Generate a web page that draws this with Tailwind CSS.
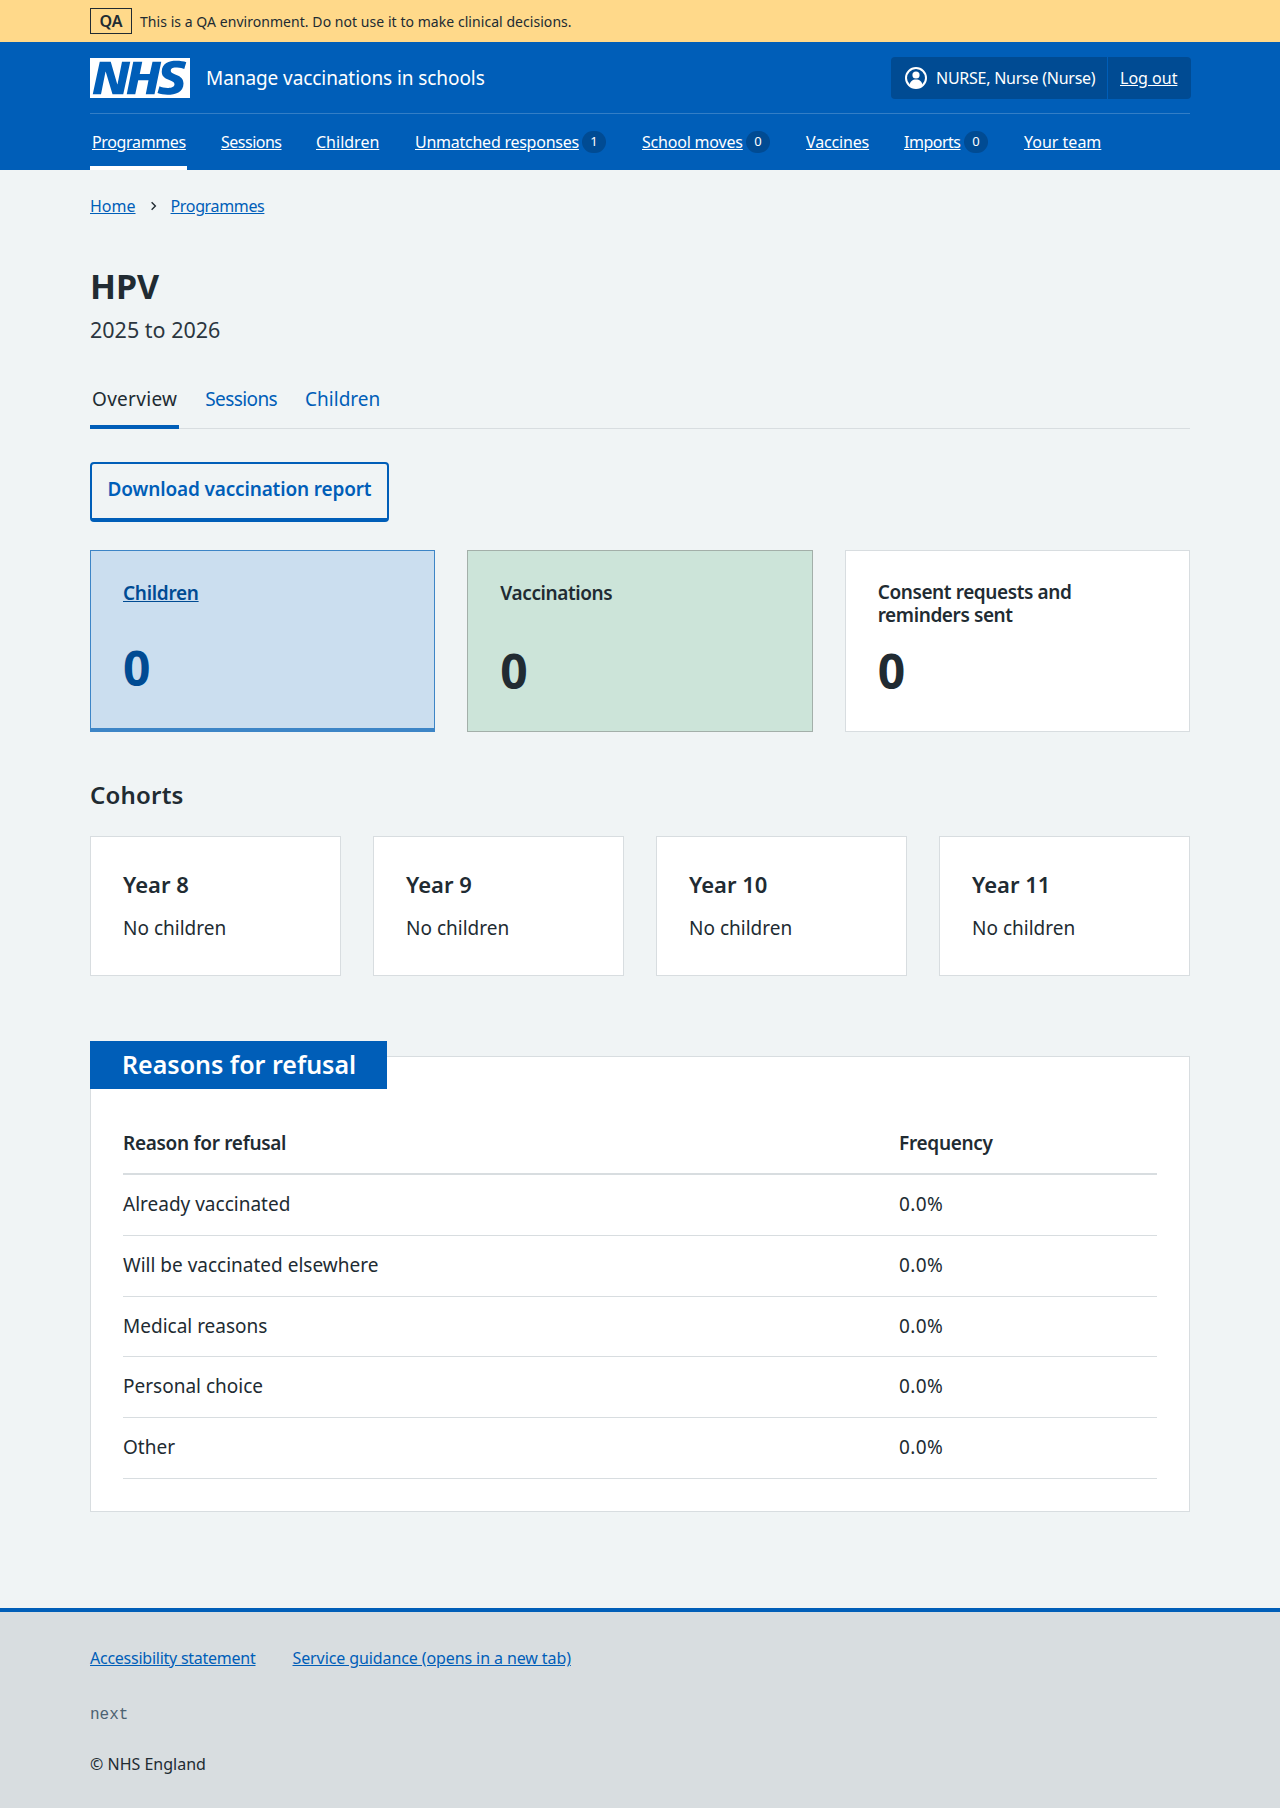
<!DOCTYPE html>
<html lang="en">
<head>
  <meta charset="UTF-8">
  <meta name="viewport" content="width=device-width, initial-scale=1.0">
  <title>HPV – Manage vaccinations in schools</title>
  <script src="https://cdn.jsdelivr.net/npm/@tailwindcss/browser@4"></script>
</head>
<body class="bg-[#f0f4f5] text-[#212b32] font-['Noto_Sans',sans-serif] min-h-[1808px] flex flex-col">

<!-- Environment banner -->
<div class="bg-[#ffd98a] h-[42px]">
  <div class="w-[1100px] mx-auto h-full flex items-center gap-2">
    <strong class="border border-[#212b32] h-[26px] w-[42px] flex items-center justify-center text-[16px] font-semibold">QA</strong>
    <span class="text-[14px] tracking-[0.05px]">This is a QA environment. Do not use it to make clinical decisions.</span>
  </div>
</div>

<!-- Header -->
<header class="bg-[#005eb8] h-[128px] text-white">
  <div class="w-[1100px] mx-auto">
    <div class="h-[72px] flex items-start justify-between border-b border-white/20">
      <div class="flex items-center gap-4 mt-4">
        <svg class="w-[100px] h-[40px]" viewBox="0 0 40 16" preserveAspectRatio="none">
          <path fill="#fff" d="M0 0h40v16H0z"></path>
          <path fill="#005eb8" d="M3.9 1.5h4.4l2.6 9h.1l1.8-9h3.3l-2.8 13H9l-2.7-9h-.1l-1.8 9H1.1M17.3 1.5h3.6l-1 4.9h4L25 1.5h3.5l-2.7 13h-3.5l1.1-5.6h-4.1l-1.2 5.6h-3.4M37.7 4.4c-.7-.3-1.6-.6-2.9-.6-1.4 0-2.5.2-2.5 1.3 0 1.8 5.1 1.2 5.1 5.1 0 3.6-3.3 4.5-6.4 4.5-1.3 0-2.9-.3-4-.7l.8-2.7c.7.4 2.1.7 3.2.7s2.8-.2 2.8-1.5c0-2.1-5.1-1.3-5.1-5 0-3.4 2.9-4.4 5.8-4.4 1.6 0 3.1.2 4 .6"></path>
        </svg>
        <span class="text-[19px] tracking-[-0.08px]">Manage vaccinations in schools</span>
      </div>
      <div class="mt-[15px] mr-[-1px] h-[42px] w-[300px] bg-[#004b93] rounded flex items-center text-[16px]">
        <div class="flex items-center gap-2 pl-[13px] w-[216px] h-full">
          <svg class="w-[24px] h-[24px]" viewBox="0 0 24 24">
            <circle cx="12" cy="12" r="10" fill="none" stroke="#fff" stroke-width="2"></circle>
            <circle cx="12" cy="9" r="3.6" fill="#fff"></circle>
            <path fill="#fff" d="M5.5 19c.5-3.5 3-5.5 6.5-5.500s6 2 6.5 5.500c-1.800 1.700-4 2.600-6.500 2.600s-4.700-.9-6.500-2.600z"></path>
          </svg>
          <span class="tracking-[-0.25px]">NURSE, Nurse (Nurse)</span>
        </div>
        <div class="h-full border-l border-[#005eb8] flex items-center pl-3">
          <a href="#" class="underline">Log out</a>
        </div>
      </div>
    </div>
    <nav class="h-[56px] flex gap-8 text-[16px] whitespace-nowrap">
      <a href="#" class="w-[97px] px-[2px] h-full pt-[16px] border-b-4 border-white"><span class="underline tracking-[-0.35px]">Programmes</span></a>
      <a href="#" class="w-[63px] px-[2px] h-full pt-[16px]"><span class="underline tracking-[-0.5px]">Sessions</span></a>
      <a href="#" class="w-[67px] px-[2px] h-full pt-[16px]"><span class="underline">Children</span></a>
      <a href="#" class="w-[195px] px-[2px] h-full pt-[16px] flex items-start"><span class="underline tracking-[-0.25px]">Unmatched responses</span><span class="ml-auto w-[24px] h-[22px] mt-[1px] rounded-full bg-[#004b93] text-[13px] flex items-center justify-center">1</span></a>
      <a href="#" class="w-[132px] px-[2px] h-full pt-[16px] flex items-start"><span class="underline tracking-[-0.2px]">School moves</span><span class="ml-auto w-[24px] h-[22px] mt-[1px] rounded-full bg-[#004b93] text-[13px] flex items-center justify-center">0</span></a>
      <a href="#" class="w-[66px] px-[2px] h-full pt-[16px]"><span class="underline tracking-[-0.15px]">Vaccines</span></a>
      <a href="#" class="w-[88px] px-[2px] h-full pt-[16px] flex items-start"><span class="underline tracking-[-0.5px]">Imports</span><span class="ml-auto w-[24px] h-[22px] mt-[1px] rounded-full bg-[#004b93] text-[13px] flex items-center justify-center">0</span></a>
      <a href="#" class="w-[80px] px-[2px] h-full pt-[16px]"><span class="underline">Your team</span></a>
    </nav>
  </div>
</header>

<main class="w-[1100px] mx-auto flex-1">
  <!-- Breadcrumb -->
  <div class="flex items-center text-[16px] text-[#005eb8] mt-[24px] h-[24px]">
    <a href="#" class="underline">Home</a>
    <svg class="w-[15px] h-[16px] mx-[10px] text-[#212b32]" viewBox="0 0 16 16"><path d="M6 4l4 4-4 4" fill="none" stroke="currentColor" stroke-width="1.500"></path></svg>
    <a href="#" class="underline tracking-[-0.35px]">Programmes</a>
  </div>

  <h1 class="text-[34px] font-bold leading-[44px] mt-[46px]">HPV</h1>
  <p class="text-[21.500px] leading-[32px] mt-[6px] text-[#2b3640]">2025 to 2026</p>

  <!-- Tabs -->
  <div class="flex gap-[24px] border-b border-[#d8dde0] h-[52px] mt-[31px] text-[19px] text-[#005eb8]">
    <a href="#" class="px-[2px] h-[52px] pt-[8px] border-b-4 border-[#005eb8] text-[#212b32] tracking-[0.3px]">Overview</a>
    <a href="#" class="px-[2px] h-full pt-[8px] tracking-[-0.6px]">Sessions</a>
    <a href="#" class="px-[2px] h-full pt-[8px]">Children</a>
  </div>

  <button class="block mt-[33px] w-[299px] h-[60px] pb-[3px] bg-transparent border-2 border-b-4 border-[#005eb8] rounded text-[#005eb8] font-semibold text-[19px] tracking-[-0.15px]">Download vaccination report</button>

  <!-- Stat cards -->
  <div class="grid grid-cols-3 gap-8 mt-[28px]">
    <div class="h-[182px] bg-[#cbdeef] border border-[#3d85c6] border-b-4 px-8 pt-[28px]">
      <a href="#" class="text-[19px] font-semibold text-[#004b93] underline leading-[28px] block tracking-[-0.3px]">Children</a>
      <p class="text-[48px] font-bold text-[#004b93] leading-[56px] mt-[33px]">0</p>
    </div>
    <div class="h-[182px] bg-[#cce4d9] border border-[#a3afa9] px-8 pt-[28px]">
      <p class="text-[19px] font-semibold leading-[28px] tracking-[-0.4px]">Vaccinations</p>
      <p class="text-[48px] font-bold leading-[56px] mt-[36px]">0</p>
    </div>
    <div class="h-[182px] bg-white border border-[#d8dde0] px-8 pt-[30px]">
      <p class="text-[19px] font-semibold leading-[23px] tracking-[-0.4px]">Consent requests and reminders sent</p>
      <p class="text-[48px] font-bold leading-[56px] mt-[16px]">0</p>
    </div>
  </div>

  <h2 class="text-[24px] font-semibold leading-[32px] mt-[47px] tracking-[0.2px]">Cohorts</h2>

  <div class="grid grid-cols-4 gap-8 mt-[25px]">
    <div class="h-[140px] bg-white border border-[#d8dde0] px-8 pt-[31px]">
      <h3 class="text-[22px] font-semibold leading-[32px]">Year 8</h3>
      <p class="text-[19px] leading-[28px] mt-[14px]">No children</p>
    </div>
    <div class="h-[140px] bg-white border border-[#d8dde0] px-8 pt-[31px]">
      <h3 class="text-[22px] font-semibold leading-[32px]">Year 9</h3>
      <p class="text-[19px] leading-[28px] mt-[14px]">No children</p>
    </div>
    <div class="h-[140px] bg-white border border-[#d8dde0] px-8 pt-[31px]">
      <h3 class="text-[22px] font-semibold leading-[32px]">Year 10</h3>
      <p class="text-[19px] leading-[28px] mt-[14px]">No children</p>
    </div>
    <div class="h-[140px] bg-white border border-[#d8dde0] px-8 pt-[31px]">
      <h3 class="text-[22px] font-semibold leading-[32px]">Year 11</h3>
      <p class="text-[19px] leading-[28px] mt-[14px]">No children</p>
    </div>
  </div>

  <!-- Reasons panel -->
  <section class="relative mt-[80px] h-[456px] bg-white border border-[#d8dde0] px-8 pt-[48px]">
    <h2 class="absolute left-[-1px] top-[-16px] h-[48px] w-[297px] bg-[#005eb8] text-white text-[25px] font-semibold pl-8 flex items-center">Reasons for refusal</h2>
    <table class="w-full text-[19px] text-left">
      <thead>
        <tr class="border-b-2 border-[#d8dde0]">
          <th class="font-semibold h-[69px] pt-[8px] tracking-[-0.3px]">Reason for refusal</th>
          <th class="font-semibold w-[258px] pt-[8px] tracking-[-0.3px]">Frequency</th>
        </tr>
      </thead>
      <tbody>
        <tr class="border-b border-[#d8dde0]"><td class="h-[61px] pb-[2px]">Already vaccinated</td><td class="pb-[2px] tracking-[0.4px]">0.0%</td></tr>
        <tr class="border-b border-[#d8dde0]"><td class="h-[61px]">Will be vaccinated elsewhere</td><td class="tracking-[0.4px]">0.0%</td></tr>
        <tr class="border-b border-[#d8dde0]"><td class="h-[60px]">Medical reasons</td><td class="tracking-[0.4px]">0.0%</td></tr>
        <tr class="border-b border-[#d8dde0]"><td class="h-[61px]">Personal choice</td><td class="tracking-[0.4px]">0.0%</td></tr>
        <tr class="border-b border-[#d8dde0]"><td class="h-[61px]">Other</td><td class="tracking-[0.4px]">0.0%</td></tr>
      </tbody>
    </table>
  </section>
</main>

<!-- Footer -->
<footer class="bg-[#d8dde0] border-t-4 border-[#005eb8] h-[200px] mt-[96px]">
  <div class="w-[1100px] mx-auto">
    <div class="flex gap-[37px] pt-[34px] text-[16px] text-[#005eb8] leading-[24px]">
      <a href="#" class="underline tracking-[-0.25px]">Accessibility statement</a>
      <a href="#" class="underline tracking-[-0.1px]">Service guidance (opens in a new tab)</a>
    </div>
    <p class="font-['Liberation_Mono',monospace] text-[16px] text-[#4c6272] mt-[33px] leading-[24px]">next</p>
    <p class="text-[16px] mt-[25px] leading-[24px]">© NHS England</p>
  </div>
</footer>

</body>
</html>
